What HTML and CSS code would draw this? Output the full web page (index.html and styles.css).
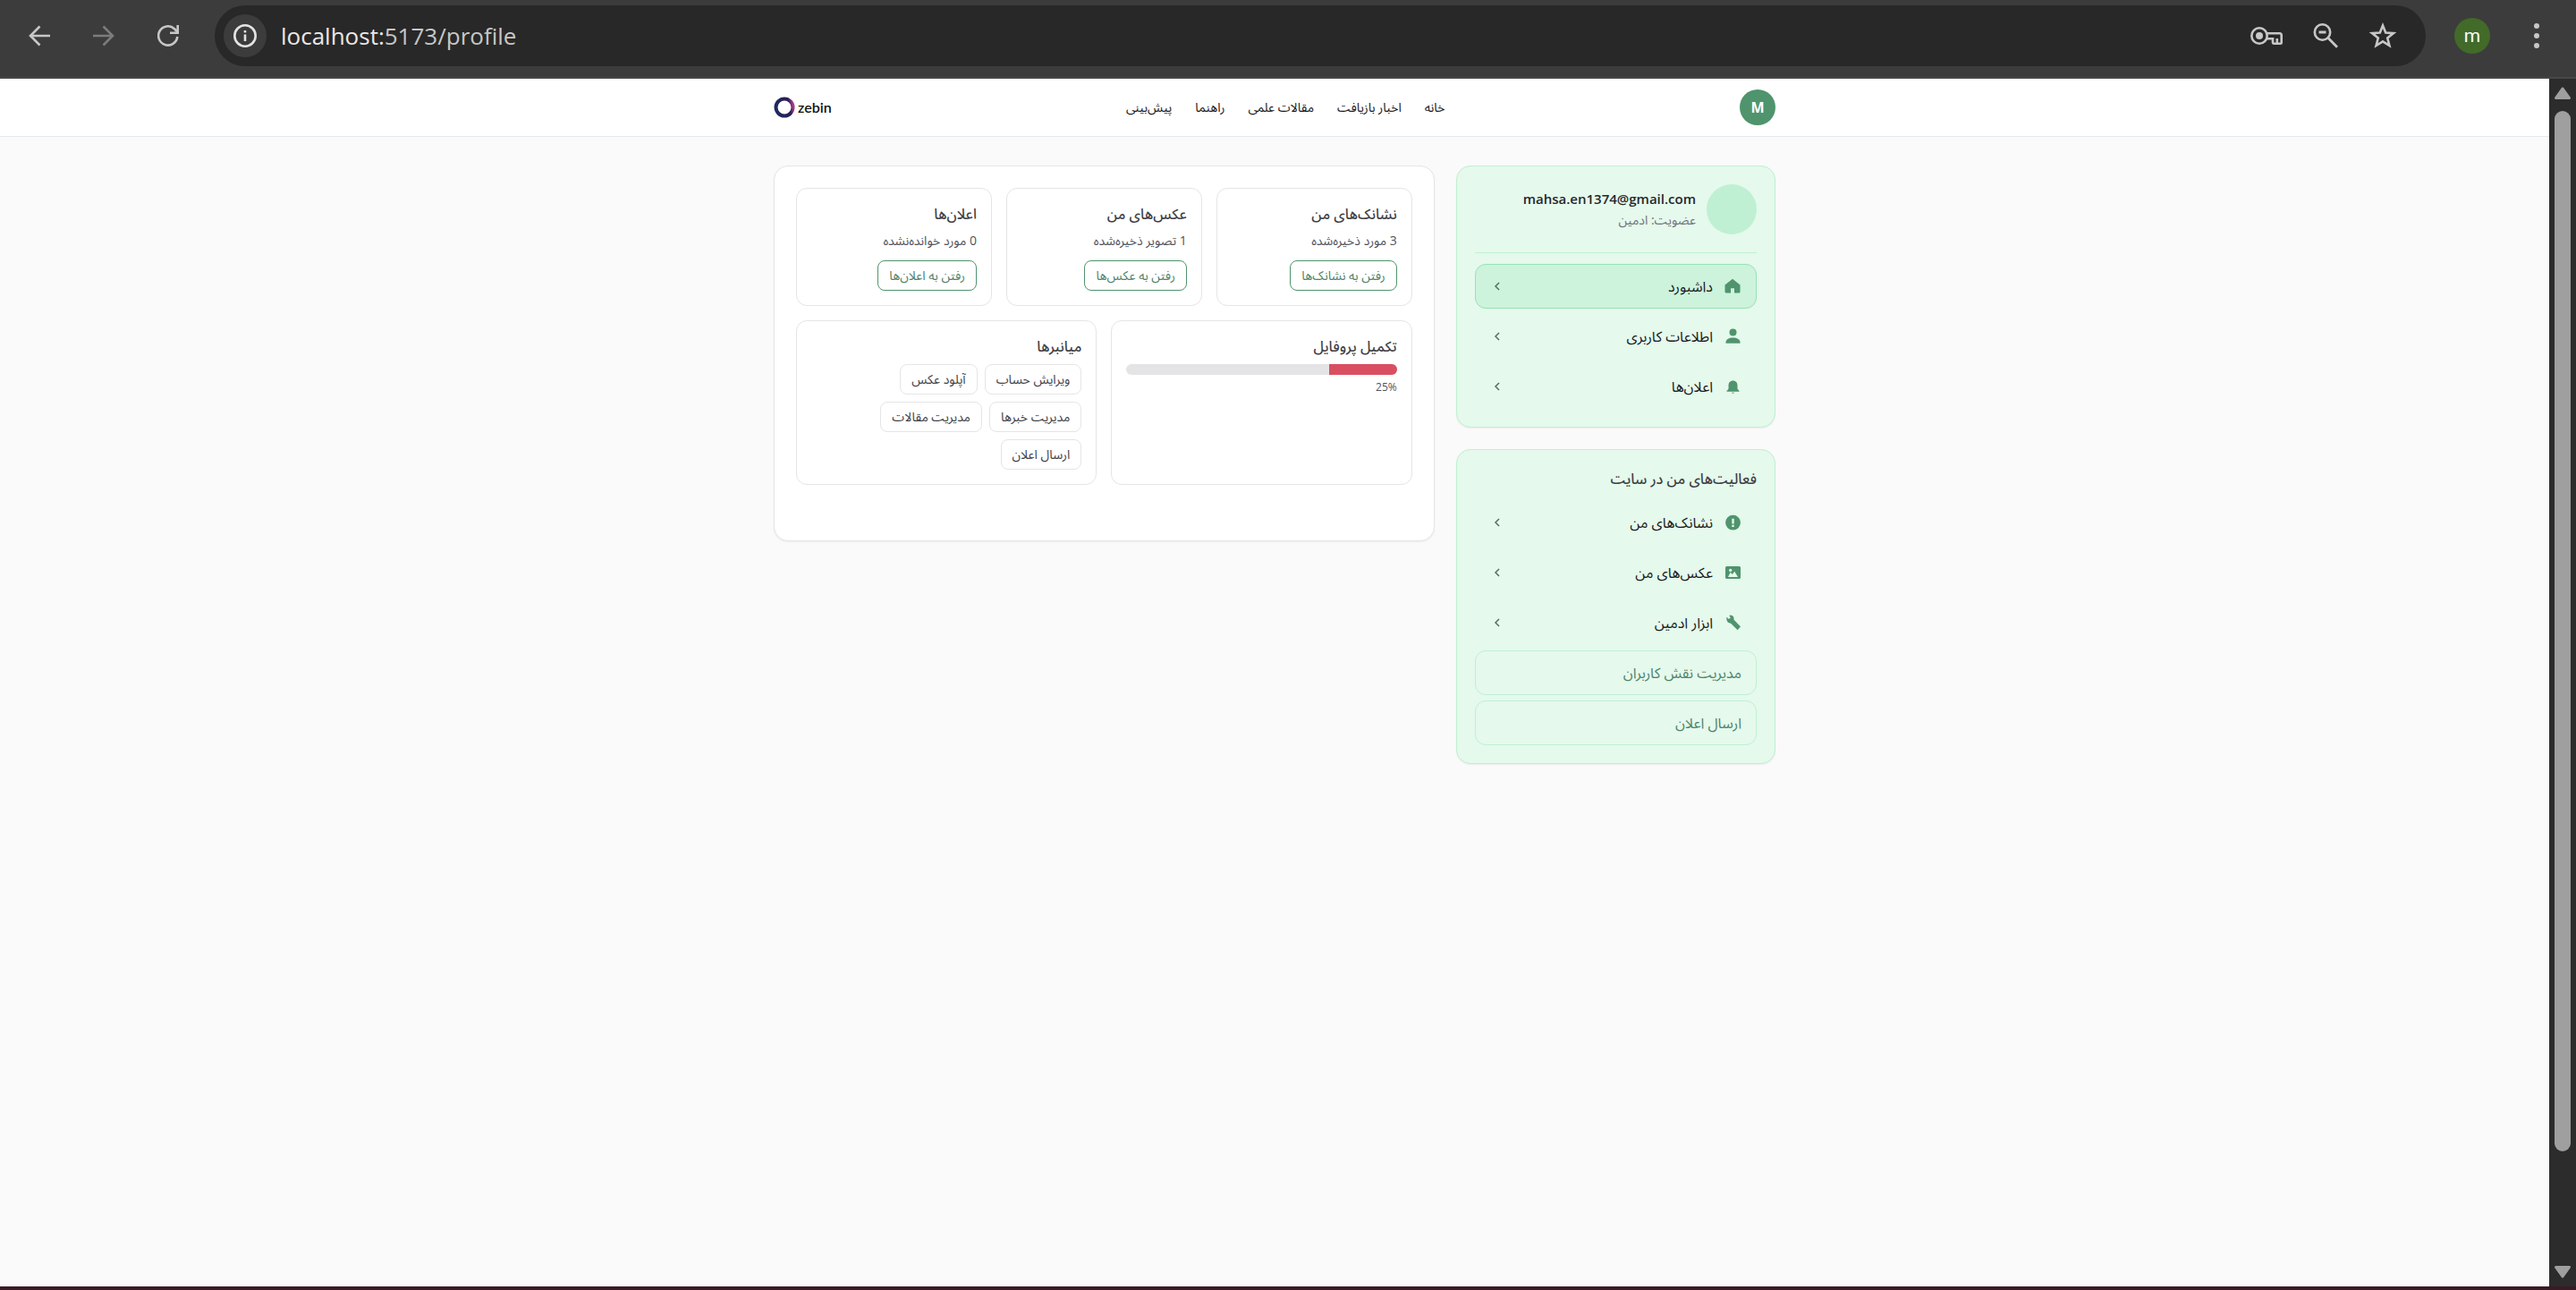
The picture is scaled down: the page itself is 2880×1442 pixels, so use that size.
FILE: index.html
```html
<!DOCTYPE html>
<html lang="fa" dir="rtl">
<head>
<meta charset="utf-8">
<meta name="viewport" content="width=device-width, initial-scale=1">
<title>zebin</title>
<link rel="stylesheet" href="styles.css">
</head>
<body>
<div class="window">
  <div class="toolbar" dir="ltr">
    <div class="nav-buttons">
      <button class="tool" aria-label="Back"><svg width="24" height="24" viewBox="0 0 24 24"><path d="M24 12H2M12.500 1.500 2 12l10.500 10.500" fill="none" stroke="#c7c7c7" stroke-width="2.600"/></svg></button>
      <button class="tool" aria-label="Forward" disabled><svg width="24" height="24" viewBox="0 0 24 24"><path d="M0 12h22M11.500 1.500 22 12 11.500 22.500" fill="none" stroke="#7c7c7c" stroke-width="2.600"/></svg></button>
      <button class="tool" aria-label="Reload"><svg width="24" height="24" viewBox="0 0 24 24"><path d="M22.300 13A10.600 10.600 0 1 1 19 4.200L22.500 8" fill="none" stroke="#c7c7c7" stroke-width="2.600"/><path d="M24 0v10H14V7.400h7.400V0z" fill="#c7c7c7"/></svg></button>
    </div>
    <div class="address">
      <button class="site-info" aria-label="Site information"><svg width="28" height="28" viewBox="0 0 28 28"><circle cx="14" cy="14" r="11.700" fill="none" stroke="#e3e3e3" stroke-width="2.600"/><path d="M12.700 12.500h2.600V20h-2.600zM12.700 8h2.600v2.600h-2.600z" fill="#e3e3e3"/></svg></button>
      <span class="url"><b>localhost:</b>5173/profile</span>
      <div class="address-actions">
        <button class="tool" aria-label="Passwords"><svg width="36" height="24" viewBox="0 0 36 24"><circle cx="10" cy="12" r="8.700" fill="none" stroke="#c7c7c7" stroke-width="2.600"/><circle cx="10" cy="12" r="4" fill="#c7c7c7"/><path d="M17.500 9.300H33a1.700 1.700 0 0 1 1.700 1.700v8.500a1.200 1.200 0 0 1-1.200 1.200h-7.300a1.200 1.200 0 0 1-1.200-1.200v-4.200h-7.500M29.800 15v5" fill="none" stroke="#c7c7c7" stroke-width="2.600"/></svg></button>
        <button class="tool" aria-label="Zoom"><svg width="28" height="28" viewBox="0 0 28 28"><circle cx="10.500" cy="10" r="8.700" fill="none" stroke="#c7c7c7" stroke-width="2.600"/><path d="M6.500 10h8M16.700 16.300 27 26.700" stroke="#c7c7c7" stroke-width="2.800"/></svg></button>
        <button class="tool" aria-label="Bookmark"><svg width="32" height="32" viewBox="0 0 32 32"><path d="m16 4.500 3.200 8 8.800.6-6.800 5.500 2.200 8.400-7.400-4.600L8.600 27l2.200-8.400L4 13.100l8.800-.6z" fill="none" stroke="#c7c7c7" stroke-width="2.600"/></svg></button>
      </div>
    </div>
    <button class="profile" aria-label="Profile">m</button>
    <button class="tool" aria-label="Menu"><svg width="8" height="28" viewBox="0 0 8 28"><g fill="#c7c7c7"><circle cx="4" cy="3" r="3"/><circle cx="4" cy="14" r="3"/><circle cx="4" cy="25" r="3"/></g></svg></button>
  </div>

  <div class="viewport">
    <div class="page">
      <header class="site-header">
        <div class="container header-row">
          <button class="avatar-button">M</button>
          <nav class="site-nav">
            <a href="#">خانه</a>
            <a href="#">اخبار بازیافت</a>
            <a href="#">مقالات علمی</a>
            <a href="#">راهنما</a>
            <a href="#">پیش‌بینی</a>
          </nav>
          <a class="logo" href="#" dir="ltr">
            <svg width="24" height="24" viewBox="0 0 24 24"><defs><linearGradient id="ring" x1="0" y1=".6" x2="1" y2=".4"><stop offset="0" stop-color="#1e2a5e"/><stop offset=".8" stop-color="#2b1f55"/><stop offset="1" stop-color="#a33a8c"/></linearGradient></defs><circle cx="12" cy="12" r="9.500" fill="none" stroke="url(#ring)" stroke-width="4"/></svg>
            <span>zebin</span>
          </a>
        </div>
      </header>

      <div class="container content">
        <aside class="sidebar">
          <section class="side-card">
            <div class="account">
              <span class="account-photo"></span>
              <div class="account-text">
                <strong>mahsa.en1374@gmail.com</strong>
                <span>عضویت: ادمین</span>
              </div>
            </div>
            <nav class="menu">
              <a class="item active" href="#"><svg class="icon" viewBox="0 0 20 20"><path d="M10 1.800 1.500 8.500V16a1.500 1.500 0 0 0 1.500 1.500h5v-5.300h4v5.300h5a1.500 1.500 0 0 0 1.500-1.500V8.500z"/></svg><span>داشبورد</span><svg class="chevron" viewBox="0 0 16 16"><path d="M10 4 6 8l4 4"/></svg></a>
              <a class="item" href="#"><svg class="icon" viewBox="0 0 20 20"><circle cx="10.500" cy="5.500" r="4"/><path d="M2.500 17.800v-1.300c0-3 3.500-5 8-5s8 2 8 5v1.300z"/></svg><span>اطلاعات کاربری</span><svg class="chevron" viewBox="0 0 16 16"><path d="M10 4 6 8l4 4"/></svg></a>
              <a class="item" href="#"><svg class="icon" viewBox="0 0 20 20"><path d="M10.500 3.500c-3.200 0-5 2.300-5 5.200v4L3.500 15v.800h14V15l-2-2.300v-4c0-2.900-1.800-5.200-5-5.200zM8.800 16.700a1.800 1.400 0 0 0 3.400 0z"/></svg><span>اعلان‌ها</span><svg class="chevron" viewBox="0 0 16 16"><path d="M10 4 6 8l4 4"/></svg></a>
            </nav>
          </section>

          <section class="side-card">
            <h2>فعالیت‌های من در سایت</h2>
            <nav class="menu">
              <a class="item" href="#"><svg class="icon" viewBox="0 0 20 20"><path fill-rule="evenodd" d="M10.500 1.800a8.400 8.400 0 1 1 0 16.800 8.400 8.400 0 0 1 0-16.800zM9.300 5.800v5.700h2.400V5.800zM9.300 12.700V15h2.400v-2.300z"/></svg><span>نشانک‌های من</span><svg class="chevron" viewBox="0 0 16 16"><path d="M10 4 6 8l4 4"/></svg></a>
              <a class="item" href="#"><svg class="icon" viewBox="0 0 20 20"><path fill-rule="evenodd" d="M3.500 3h14A1.500 1.500 0 0 1 19 4.500v11a1.500 1.500 0 0 1-1.500 1.500h-14A1.500 1.500 0 0 1 2 15.500v-11A1.500 1.500 0 0 1 3.500 3zM5 15h11l-3.800-6.200L9.800 12 7.700 9.800zM7.700 5.700a1.700 1.700 0 1 0 0 3.400 1.700 1.700 0 0 0 0-3.400z"/></svg><span>عکس‌های من</span><svg class="chevron" viewBox="0 0 16 16"><path d="M10 4 6 8l4 4"/></svg></a>
              <a class="item" href="#"><svg class="icon" viewBox="0 0 20 20"><path d="M3.500 3.800 5.800 6 7.800 4.500 6.300 2c3-.9 5.800 1.200 5.200 4.800L19 14.500 15.600 18.200 8 10.800C4.500 10.500 2.700 7.500 3.500 3.800z"/></svg><span>ابزار ادمین</span><svg class="chevron" viewBox="0 0 16 16"><path d="M10 4 6 8l4 4"/></svg></a>
              <a class="item sub" href="#">مدیریت نقش کاربران</a>
              <a class="item sub" href="#">ارسال اعلان</a>
            </nav>
          </section>
        </aside>

        <main class="panel">
          <div class="grid three">
            <section class="card">
              <h3>نشانک‌های من</h3>
              <p>3 مورد ذخیره‌شده</p>
              <button class="btn outline">رفتن به نشانک‌ها</button>
            </section>
            <section class="card">
              <h3>عکس‌های من</h3>
              <p>1 تصویر ذخیره‌شده</p>
              <button class="btn outline">رفتن به عکس‌ها</button>
            </section>
            <section class="card">
              <h3>اعلان‌ها</h3>
              <p>0 مورد خوانده‌نشده</p>
              <button class="btn outline">رفتن به اعلان‌ها</button>
            </section>
          </div>
          <div class="grid two">
            <section class="card">
              <h3>تکمیل پروفایل</h3>
              <div class="progress"><div class="progress-fill" style="width: 25%"></div></div>
              <small dir="ltr">25%</small>
            </section>
            <section class="card">
              <h3>میانبرها</h3>
              <div class="chips">
                <button class="btn">ویرایش حساب</button>
                <button class="btn">آپلود عکس</button>
                <button class="btn">مدیریت خبرها</button>
                <button class="btn">مدیریت مقالات</button>
                <button class="btn">ارسال اعلان</button>
              </div>
            </section>
          </div>
        </main>
      </div>
    </div>

    <div class="scrollbar">
      <svg width="18" height="14" viewBox="0 0 18 14"><path d="M9 2 16.500 12.500H1.500z" fill="#9f9f9f" stroke="#9f9f9f" stroke-width="3" stroke-linejoin="round"/></svg>
      <div class="track"><div class="thumb"></div></div>
      <svg width="18" height="14" viewBox="0 0 18 14"><path d="M9 12 16.500 1.500H1.500z" fill="#9f9f9f" stroke="#9f9f9f" stroke-width="3" stroke-linejoin="round"/></svg>
    </div>
  </div>
</div>
</body>
</html>
```
FILE: styles.css
```css
* {
  box-sizing: border-box;
}

body {
  margin: 0;
  background: #fafafa;
  color: #18181b;
  font-family: "Open Sans", "Noto Sans Arabic", "DejaVu Sans", sans-serif;
  font-size: 16px;
  line-height: 24px;
}

h2, h3, p {
  margin: 0;
}

a {
  color: inherit;
  text-decoration: none;
}

button {
  font: inherit;
  color: inherit;
  padding: 0;
  border: 0;
  background: none;
}

svg {
  display: block;
  flex: none;
}

.window {
  display: flex;
  flex-direction: column;
  height: 100vh;
  border-bottom: 4px solid #3a1a24;
}

/* Browser toolbar */
.toolbar {
  display: flex;
  align-items: center;
  gap: 32px;
  height: 88px;
  flex: none;
  padding: 0 40px 6px 32px;
  background: #3c3c3c;
  border-bottom: 2px solid #484848;
}

.nav-buttons {
  display: flex;
  gap: 48px;
  padding-right: 8px;
}

.address {
  display: flex;
  align-items: center;
  flex: 1;
  height: 68px;
  padding: 0 32px 0 10px;
  border-radius: 34px;
  background: #282828;
}

.site-info {
  display: grid;
  place-items: center;
  width: 48px;
  height: 48px;
  border-radius: 50%;
  background: #3c3c3c;
}

.url {
  flex: 1;
  margin-left: 16px;
  color: #c7c7c7;
  font-size: 26px;
  line-height: 40px;
}

.url b {
  color: #e8e8e8;
  font-weight: 400;
}

.address-actions {
  display: flex;
  align-items: center;
  gap: 34px;
}

.profile {
  width: 40px;
  height: 40px;
  border-radius: 50%;
  background: #426a28;
  color: #fff;
  font-family: Roboto, sans-serif;
  font-size: 21px;
}

.toolbar > .tool {
  margin-left: 16px;
}

/* Browser viewport */
.viewport {
  display: flex;
  flex: 1;
  min-height: 0;
  direction: ltr;
}

.page {
  flex: 1;
  direction: rtl;
}

.scrollbar {
  display: flex;
  flex-direction: column;
  align-items: center;
  gap: 13px;
  width: 30px;
  padding: 9px 0;
  background: #2c2c2c;
}

.track {
  flex: 1;
  width: 18px;
}

.thumb {
  height: 91%;
  border-radius: 9px;
  background: #9f9f9f;
}

/* Site */
.container {
  width: 100%;
  max-width: 1120px;
  margin: 0 auto;
}

.site-header {
  background: #fff;
  border-bottom: 1px solid #e2e8f0;
}

.header-row {
  display: flex;
  align-items: center;
  justify-content: space-between;
  height: 64px;
}

.avatar-button {
  width: 40px;
  height: 40px;
  border-radius: 50%;
  background: #4f946d;
  color: #fff;
  font-weight: 700;
}

.site-nav {
  display: flex;
  gap: 26px;
  font-size: 14px;
}

.logo {
  display: flex;
  align-items: center;
  gap: 3px;
  color: #111;
  font-family: Lato, sans-serif;
  font-size: 16px;
  font-weight: 600;
}

.content {
  display: grid;
  grid-template-columns: repeat(12, 1fr);
  align-items: start;
  gap: 24px;
  padding: 32px 0;
}

.sidebar {
  display: grid;
  grid-column: span 4;
  gap: 24px;
}

.side-card {
  padding: 20px;
  border: 1px solid #bff0d3;
  border-radius: 16px;
  background: #e5f9ec;
  box-shadow: 0 1px 2px rgba(0, 0, 0, .06);
}

.side-card h2 {
  margin-bottom: 12px;
  color: #3f3f46;
  font-size: 16px;
  font-weight: 500;
}

.account {
  display: flex;
  align-items: center;
  gap: 12px;
  margin-bottom: 12px;
  padding-bottom: 20px;
  border-bottom: 1px solid #bff0d3;
}

.account-photo {
  width: 56px;
  height: 56px;
  border-radius: 50%;
  background: #bff0d3;
}

.account-text {
  display: grid;
}

.account-text strong {
  color: #27272a;
  font-size: 15px;
  font-weight: 600;
}

.account-text span {
  color: #71717a;
  font-size: 14px;
}

.menu {
  display: grid;
  gap: 6px;
}

.item {
  display: flex;
  align-items: center;
  gap: 12px;
  height: 50px;
  padding: 0 16px;
  border: 1px solid transparent;
  border-radius: 12px;
}

.item span {
  flex: 1;
}

.item.active {
  background: #cdf3dc;
  border-color: #96e2b5;
}

.item.sub {
  border-color: #bff0d3;
  color: #4f826a;
}

.icon {
  width: 20px;
  height: 20px;
  fill: #4f946d;
}

.chevron {
  width: 16px;
  height: 16px;
  fill: none;
  stroke: #52705f;
  stroke-width: 1.5;
}

.panel {
  display: grid;
  grid-column: span 8;
  align-content: start;
  gap: 16px;
  min-height: 420px;
  padding: 24px;
  border: 1px solid #e5e5e5;
  border-radius: 16px;
  background: #fff;
  box-shadow: 0 1px 2px rgba(0, 0, 0, .06);
}

.grid {
  display: grid;
  gap: 16px;
}

.three {
  grid-template-columns: repeat(3, 1fr);
}

.two {
  grid-template-columns: repeat(2, 1fr);
}

.card {
  display: flex;
  flex-direction: column;
  align-items: flex-start;
  gap: 8px;
  padding: 16px;
  border: 1px solid #e5e5e5;
  border-radius: 12px;
}

.card h3 {
  color: #3f3f46;
  font-size: 16px;
  font-weight: 500;
}

.card p {
  margin-bottom: 4px;
  color: #52525b;
  font-size: 14px;
  line-height: 20px;
}

.card small {
  color: #52525b;
  font-size: 12px;
  line-height: 12px;
}

.btn {
  height: 34px;
  padding: 0 12px;
  border: 1px solid #e5e5e5;
  border-radius: 8px;
  color: #3f3f46;
  font-size: 14px;
}

.btn.outline {
  border-color: #4f946d;
  color: #4f826a;
}

.progress {
  width: 100%;
  height: 12px;
  overflow: hidden;
  border-radius: 6px;
  background: #e4e4e6;
}

.progress-fill {
  height: 100%;
  background: #d94f61;
}

.chips {
  display: flex;
  flex-wrap: wrap;
  gap: 8px;
}
```
